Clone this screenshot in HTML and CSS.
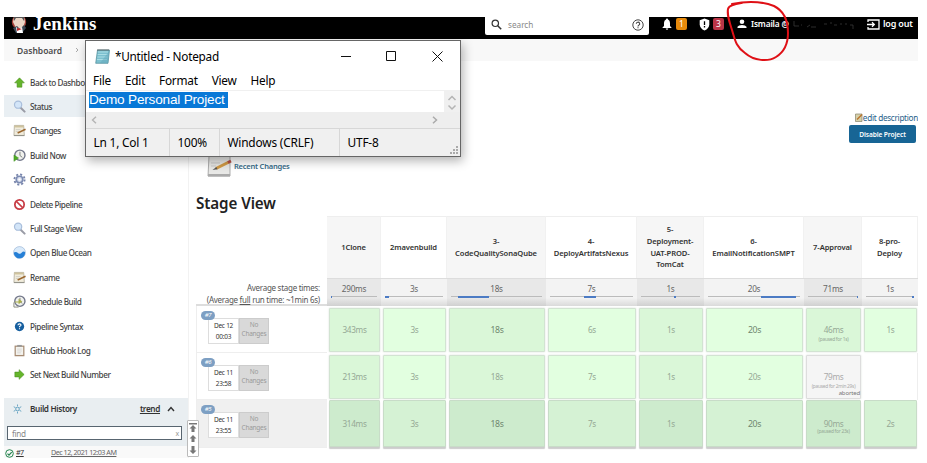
FILE: index.html
```html
<!DOCTYPE html>
<html lang="en">
<head>
<meta charset="utf-8">
<title>Jenkins - Stage View</title>
<link rel="stylesheet" href="styles.css">
</head>
<body>
<svg class="defs" width="0" height="0">
  <defs>
    <symbol id="search" viewBox="0 0 14 14"><path d="M8 8l4.500 4.500" stroke="#9a9ca6" stroke-width="2.200" stroke-linecap="round"/><circle cx="5.500" cy="5" r="3.900" fill="#d3e5f8" stroke="#a9bedb" stroke-width="1.300"/></symbol>
    <symbol id="note" viewBox="0 0 14 14"><path d="M1.500 1.500h10l.7 10.800H1z" fill="#f1ecdc" stroke="#aaa593" stroke-width=".8"/><path d="M1.500 1.700h10v2h-10z" fill="#cfc39d"/><path d="M3 6h5M3 8h3" stroke="#c2c2bd" stroke-width=".7"/><path d="M5 9.600l8.500-4" stroke="#9b672f" stroke-width="1.700"/><path d="M1 12.500h11.300" stroke="#8b8b84"/></symbol>
    <symbol id="arrow" viewBox="0 0 14 14"><path d="M7 2l5.200 5.400H9.600V12H4.400V7.400H1.800z" fill="#65b52b" stroke="#478b1d" stroke-width=".6"/></symbol>
    <symbol id="clock" viewBox="0 0 14 14"><circle cx="7.400" cy="6.700" r="5.500" fill="#f0f1ed" stroke="#72778a" stroke-width="1.500"/><path d="M7.500 3v4l2.500 2" fill="none" stroke="#777b79"/></symbol>
  </defs>
</svg>
<div class="app">
  <header class="top">
    <svg class="butler" viewBox="0 0 18 18" width="18" height="18"><circle cx="9" cy="5" r="7.200" fill="#a6423b"/><path d="M4 0h10l1 5-2 6H6L3 5z" fill="#ead5c5"/><path d="M4 0v4l2-3h6l2 3V0z" fill="#555"/><path d="M3 11l4-2 3 3 4-4 2 3-4 5H6z" fill="#394653"/><path d="M6 10l3 2 3-2 1 6H7z" fill="#fff"/><path d="M7 11l5 1-5 2z" fill="#bb2525"/></svg>
    <span class="brand">Jenkins</span>
    <div class="searchbox">
      <svg width="11" height="11" viewBox="0 0 11 11" fill="none" stroke="#333" stroke-width="1.200"><circle cx="4.300" cy="4.300" r="3.200"/><path d="M6.700 6.700L10.200 10.200" stroke-width="1.500"/></svg>
      <span>search</span>
      <svg class="help" width="12" height="12" viewBox="0 0 12 12" fill="none" stroke="#444"><circle cx="6" cy="6" r="5.200"/><path d="M4.300 4.800a1.700 1.600 0 1 1 2.600 1.300Q6 6.700 6 7.400M6 8.200v1.100" stroke-width="1.100"/></svg>
    </div>
    <svg class="bell" width="10" height="12" viewBox="0 0 10 12" fill="#fff"><path d="M5 0.500Q6 .5 6 1.500Q8 2.200 8 5v3l1.500 1.500v.5H.5v-.5L2 8V5Q2 2.200 4 1.500Q4 .5 5 .5zM3.700 10.500h2.600Q6 11.700 5 11.700T3.700 10.500z"/></svg>
    <span class="badge orange">1</span>
    <svg class="shield" width="11" height="13" viewBox="0 0 11 13"><path d="M5.500.5L10.300 2.300v4.200Q10 10.500 5.500 12.500Q1 10.500.7 6.500V2.300z" fill="#fff"/><path d="M5.500 3.200v3.800M5.500 8v1.500" stroke="#000" stroke-width="1.300"/></svg>
    <span class="badge red">3</span>
    <svg class="person" width="10" height="10" viewBox="0 0 10 10" fill="#fff"><circle cx="5" cy="2.700" r="2.300"/><path d="M.5 9V7.800Q1.500 6 5 6t4.500 1.800V9z"/></svg>
    <span class="user">Ismaila @</span>
    <svg class="scrub" width="62" height="10" viewBox="0 0 62 10" fill="none" stroke="#383838" stroke-width=".8"><path d="M1 1v5h5M8 5h1M14 7l3-2M18 7h5M31 4h3M38 2v2M41 5h3M47 4h2M53 3v2M57 5h3v4"/></svg>
    <svg class="exit" width="13" height="11" viewBox="0 0 13 11" fill="none" stroke="#fff" stroke-width="1.300"><path d="M1 3V1h11v9H1V8M0 5.500h7M5 3.300l2.300 2.200L5 7.700"/></svg>
    <span class="logout">log out</span>
  </header>
  <nav class="crumbs"><span>Dashboard</span><svg width="4" height="6" viewBox="0 0 4 6"><path d="M1 1l2 2-2 2" fill="none" stroke="#aaa"/></svg></nav>
  <div class="body">
    <aside class="side">
      <ul class="tasks">
        <li><svg><use href="#arrow"/></svg><span>Back to Dashboard</span></li>
        <li class="active"><svg><use href="#search"/></svg><span>Status</span></li>
        <li><svg><use href="#note"/></svg><span>Changes</span></li>
        <li><svg viewBox="0 0 14 14"><use href="#clock" width="14" height="14"/><path d="M1 6.500l5 3.200-5 3.600z" fill="#4eaa25" stroke="#398d1b" stroke-width=".5"/></svg><span>Build Now</span></li>
        <li><svg viewBox="0 0 14 14"><circle cx="7" cy="7" r="5.500" fill="none" stroke="#7784ab" stroke-width="2" stroke-dasharray="2.200 2.120"/><circle cx="7" cy="7" r="3.500" fill="#dce1ef" stroke="#7d8cb2" stroke-width="1.800"/><circle cx="7" cy="7" r="1.200" fill="#fff"/></svg><span>Configure</span></li>
        <li><svg viewBox="0 0 14 14"><circle cx="7" cy="7" r="5" fill="#fff" stroke="#c83c45" stroke-width="1.900"/><path d="M3.500 3.500l7 7" stroke="#c83c45" stroke-width="1.900"/></svg><span>Delete Pipeline</span></li>
        <li><svg><use href="#search"/></svg><span>Full Stage View</span></li>
        <li><svg viewBox="0 0 14 14"><circle cx="7" cy="7" r="6.400" fill="#d9eafa" stroke="#8baace" stroke-width=".6"/><path d="M1 7Q3 5.500 6 8q2 1 3.500-1Q11 5 13 6.500A6 6 0 0 1 1 8z" fill="#257fd6"/></svg><span>Open Blue Ocean</span></li>
        <li><svg><use href="#note"/></svg><span>Rename</span></li>
        <li><svg viewBox="0 0 14 14"><use href="#clock" width="14" height="14"/><path d="M2 7h4V4l4 3-4 3V8H2z" fill="#a8ad4d"/><path d="M1 8v5h5" stroke="#858778" fill="none"/></svg><span>Schedule Build</span></li>
        <li><svg viewBox="0 0 14 14"><circle cx="7" cy="7" r="5" fill="#175f9f"/><path d="M5.300 5.700q.2-1.500 1.700-1.500t1.700 1.200Q8.700 6.300 7 7v.8M7 8.800V10" fill="none" stroke="#fff" stroke-width="1.200"/></svg><span>Pipeline Syntax</span></li>
        <li><svg viewBox="0 0 14 14"><rect x="1.700" y="1.700" width="10.600" height="11.500" fill="#a68b73"/><path d="M3 3h8v8.800H3z" fill="#f4f3ee"/><path d="M4.500 1h5v2h-5z" fill="#999"/><path d="M4.500 5.500h5m-5 2h5m-5 2h4" stroke="#ccc" stroke-width=".7"/></svg><span>GitHub Hook Log</span></li>
        <li><svg viewBox="0 0 14 14"><g transform="rotate(90 7 7)"><use href="#arrow" width="14" height="14"/></g></svg><span>Set Next Build Number</span></li>
      </ul>
      <section class="history">
        <div class="hist-head"><svg width="9" height="10" viewBox="0 0 10 10" fill="none" stroke="#4d94b8" stroke-width=".9"><circle cx="5" cy="5" r="2"/><path d="M5 0v2M5 8v2M.8 2.500l2 1M7.200 6.500l2 1M.8 7.500l2-1M7.200 3.500l2-1"/></svg><b>Build History</b><u>trend</u><svg width="8" height="6" viewBox="0 0 8 6"><path d="M1 5l3-3.500L7 5" fill="none" stroke="#333" stroke-width="1.400"/></svg></div>
        <div class="find"><span>find</span><i>x</i></div>
      </section>
      <div class="build"><svg width="9" height="9" viewBox="0 0 9 9" fill="none" stroke="#24844e"><circle cx="4.500" cy="4.500" r="3.800"/><path d="M2.500 4.600l1.500 1.500 2.700-3" stroke-width="1.200"/></svg><u class="num">#7</u><u>Dec 12, 2021 12:03 AM</u></div>
    </aside>
    <main class="main">
      <div class="desc"><a><svg width="8" height="9" viewBox="0 0 8 9"><path d="M.5 1h6.500v7.500H.5z" fill="#d6d1aa" stroke="#86836a" stroke-width=".7"/><path d="M2 6.500l5-5" stroke="#bb742d" stroke-width="1.500"/></svg>edit description</a></div>
      <div class="disable"><button>Disable Project</button></div>
      <div class="recent"><svg width="25" height="24" viewBox="0 0 25 24"><path d="M2 1h21v20H1z" fill="#e8e8e6" stroke="#999" stroke-width=".8"/><path d="M1 19h22v2.500H1z" fill="#aaa"/><path d="M4 8h9M4 11h5" stroke="#c9c9c9"/><path d="M9 13.500L22 7" stroke="#d19a45" stroke-width="3"/><path d="M21 7.500l3-1.500" stroke="#b54f46" stroke-width="3"/><path d="M5.500 15l3.800-3 1.200 2.300z" fill="#555"/></svg><a>Recent Changes</a></div>
      <h1>Stage View</h1>
      <div class="stages">
        <div></div><div class="h o">1Clone</div><div class="h">2mavenbuild</div><div class="h o">3-<br>CodeQualitySonaQube</div><div class="h">4-<br>DeployArtifatsNexus</div><div class="h o">5-<br>Deployment-<br>UAT-PROD-<br>TomCat</div><div class="h">6-<br>EmailNotificationSMPT</div><div class="h o">7-Approval</div><div class="h">8-pro-<br>Deploy</div>
        <div class="avg-label">Average stage times:<br>(Average <u>full</u> run time: ~1min 6s)</div>
        <div class="avg o">290ms<span class="bar"><i style="margin-left:0;width:1%"></i></span></div>
        <div class="avg">3s<span class="bar"><i style="margin-left:0;width:7%"></i></span></div>
        <div class="avg o">18s<span class="bar"><i style="margin-left:8%;width:34%"></i></span></div>
        <div class="avg">7s<span class="bar"><i style="margin-left:41%;width:15%"></i></span></div>
        <div class="avg o">1s<span class="bar"><i style="margin-left:56%;width:4%"></i></span></div>
        <div class="avg">20s<span class="bar"><i style="margin-left:58%;width:38%"></i></span></div>
        <div class="avg o">71ms<span class="bar"><i style="margin-left:97%;width:2%"></i></span></div>
        <div class="avg">1s<span class="bar"><i style="margin-left:95%;width:5%"></i></span></div>

        <div class="run"><span class="tag">#7</span><div class="when"><span>Dec 12</span><span>00:03</span></div><div class="nochg">No<br>Changes</div></div>
        <div class="c o">343ms</div><div class="c">3s</div><div class="c o big">18s</div><div class="c">6s</div><div class="c o">1s</div><div class="c big">20s</div><div class="c o">46ms<small>(paused for 1s)</small></div><div class="c">1s</div>
        <div class="run"><span class="tag">#6</span><div class="when"><span>Dec 11</span><span>23:58</span></div><div class="nochg">No<br>Changes</div></div>
        <div class="c o">213ms</div><div class="c">3s</div><div class="c o">18s</div><div class="c">7s</div><div class="c o">1s</div><div class="c">20s</div><div class="c aborted">79ms<small>(paused for 2min 29s)</small><em>aborted</em></div><div class="none"></div>
        <div class="run last"><span class="tag">#5</span><div class="when"><span>Dec 11</span><span>23:55</span></div><div class="nochg">No<br>Changes</div></div>
        <div class="c o d">314ms</div><div class="c d">3s</div><div class="c o d big">18s</div><div class="c d">7s</div><div class="c o d">1s</div><div class="c d big">20s</div><div class="c o d">90ms<small>(paused for 23s)</small></div><div class="c d">2s</div>
      </div>
    </main>
  </div>
</div>

<div class="scroller"><svg width="8" height="32" viewBox="0 0 8 32" fill="#777"><path d="M0 0h8v1.500H0zM4 2l3.500 3.500h-2V9h-3V5.500h-2zM4 12l3.500 3.500h-2V19h-3v-3.500h-2zM4 31L.5 27.500h2V23h3v4.500h2z"/></svg></div>

<div class="notepad">
  <div class="title"><svg width="15" height="16" viewBox="0 0 15 16"><path d="M2.500 2h12l-1.500 13.300H.7z" fill="#7cc0cf" stroke="#4d8996" stroke-width=".7"/><path d="M3 4h10M2.700 6.500h10M2.500 9h10M2 11.500h10" stroke="#b7e4eb" stroke-width=".8"/><path d="M3 1v2m2-2v2m2-2v2m2-2v2m2-2v2m2-2v2" stroke="#555" stroke-width=".8"/><path d="M14.300 3L13 15.300H5z" fill="#64a7bb" opacity=".5"/></svg><span>*Untitled - Notepad</span>
    <svg class="wc" width="102" height="12" viewBox="0 0 102 12" fill="none" stroke="#111" stroke-width="1"><path d="M0 6.500h10M45.500 1.500h9v9h-9zM91.500 1.500l10 10M101.500 1.500l-10 10"/></svg></div>
  <div class="menu"><span>File</span><span>Edit</span><span>Format</span><span>View</span><span>Help</span></div>
  <div class="edit"><div class="doc"><span>Demo Personal Project&nbsp;</span></div><svg width="16" height="21" viewBox="0 0 16 21" fill="none" stroke="#b4b4b4" stroke-width="1.500"><path d="M4.500 9L8 5.500 11.500 9M4.500 14.500L8 18l3.500-3.500"/></svg></div>
  <div class="hscroll"><svg width="6" height="8" viewBox="0 0 6 8"><path d="M5 .7L1.500 4 5 7.300" fill="none" stroke="#b4b4b4" stroke-width="1.400"/></svg><svg width="6" height="8" viewBox="0 0 6 8"><path d="M1 .7L4.500 4 1 7.300" fill="none" stroke="#aaa" stroke-width="1.500"/></svg></div>
  <div class="status"><span class="p1">Ln 1, Col 1</span><span class="p2">100%</span><span class="p3">Windows (CRLF)</span><span class="p4">UTF-8</span><svg width="8" height="8" viewBox="0 0 8 8" fill="#aaa"><path d="M6 0h2v2H6zM6 3h2v2H6zM3 3h2v2H3zM0 6h2v2H0zM3 6h2v2H3zM6 6h2v2H6z"/></svg></div>
</div>

<svg class="mark" width="68" height="64" viewBox="0 0 68 64" fill="none" stroke="#df1016" stroke-width="2" stroke-linecap="round"><path d="M6 4C20 1 35 1 48 6C58 11 62 22 62 33C62 43 58 52 50 57C42 62 28 61 19 53C10 47 9 40 6 30C3 21 1 15 2 9C3 5 10 4 16 3"/></svg>
</body>
</html>
```
FILE: styles.css
```css
* { box-sizing: border-box; }
body { margin: 0; width: 927px; height: 463px; overflow: hidden; background: #fff; font-family: "Noto Sans", "Open Sans", sans-serif; font-size: 8px; color: #333; position: relative; }
.defs { position: absolute; }
svg { flex: none; display: block; }
.app { margin: 17px 0 0 4px; width: 914px; height: 441px; overflow: hidden; }

.top { height: 22px; background: #000; display: flex; align-items: flex-start; color: #fff; white-space: nowrap; }
.butler { margin-left: 6px; }
.brand { font: bold 19px/16px "Liberation Serif", serif; width: 452px; margin: -1px 0 0 5px; letter-spacing: .2px; }
.searchbox { height: 18px; width: 164px; background: #fff; border-radius: 0 0 2px 2px; display: flex; align-items: center; padding: 0 5px 3px 6px; color: #888; font-size: 8.2px; }
.searchbox span { margin-left: 6px; }
.searchbox .help { margin-left: auto; }
.bell { margin: 1px 0 0 13px; }
.badge { width: 11px; height: 12px; border-radius: 2px; font-size: 8.5px; line-height: 12px; text-align: center; margin-top: 1px; }
.orange { background: #e88b0c; margin-left: 4px; }
.red { background: #ba3547; margin-left: 3px; }
.shield { margin: 1px 0 0 12px; }
.person { margin: 2px 0 0 13px; }
.user { font-weight: 600; font-size: 8.3px; line-height: 14px; margin-left: 4px; width: 41px; letter-spacing: -.15px; }
.scrub { margin: 3px 0 0 1px; }
.exit { margin: 2px 0 0 12px; }
.logout { font-weight: 600; font-size: 9px; line-height: 14px; margin-left: 3px; letter-spacing: -.2px; }

.crumbs { height: 22px; background: #f8f8f8; display: flex; align-items: center; gap: 13px; padding: 0 0 0 13px; font-weight: 600; font-size: 8.5px; color: #4c4c4c; }
.body { display: flex; height: 397px; }
.side { width: 185px; border-right: 1px solid #f2f2f2; flex: none; }
.tasks { list-style: none; margin: 0; padding: 9px 0 0; height: 337px; }
.tasks li { display: flex; align-items: center; gap: 4px; height: 24.4px; padding-left: 9px; font-weight: 500; font-size: 8.2px; letter-spacing: -.44px; color: #444; white-space: nowrap; }
.tasks svg { width: 13px; height: 13px; }
.tasks .active { background: linear-gradient(#e9eff3, #e9eff3) 0 1px / 100% 22px no-repeat; }
.history { background: #e9eef1; height: 48px; padding: 3px 6px 0 3px; }
.hist-head { display: flex; align-items: center; height: 15px; padding-left: 6px; font-size: 8.2px; font-weight: 600; color: #333; }
.hist-head b { font-weight: 600; margin-left: 8px; letter-spacing: -.35px; }
.hist-head u { margin: 0 7px 0 auto; letter-spacing: -.35px; }
.hist-head svg:last-child { margin-right: 7px; }
.find { margin-top: 10px; height: 14px; background: #fff; border: 1px solid #586570; display: flex; justify-content: space-between; align-items: center; padding: 0 2px 0 4px; color: #888; font-size: 8.2px; letter-spacing: -.3px; }
.find i { font-style: normal; font-size: 7px; color: #999; }
.build { height: 12px; background: #f9f9f9; display: flex; align-items: center; padding: 0 0 0 1px; color: #666; font-size: 7.2px; line-height: 10px; letter-spacing: -.52px; }
.build svg { margin-top: 3px; }
.build .num { width: 35px; margin-left: 2px; color: #333; }

.main { flex: 1; min-width: 0; padding: 49px 0 0 7px; }
.desc { height: 15px; display: flex; justify-content: flex-end; }
.desc a { display: flex; align-items: center; height: 15px; font-size: 8.2px; letter-spacing: -.3px; color: #27618a; white-space: nowrap; }
.disable { display: flex; justify-content: flex-end; height: 30px; padding-right: 2px; }
.disable button { width: 67px; height: 18px; border: 0; border-radius: 2px; background: #176595; color: #fff; font: 600 6.6px "Noto Sans", sans-serif; letter-spacing: -.1px; padding: 0; white-space: nowrap; }
.recent { display: flex; height: 26px; padding-left: 11px; gap: 2px; }
.recent a { font-size: 7.5px; font-weight: 600; color: #356b88; line-height: 22px; letter-spacing: -.22px; }
h1 { margin: 12px 0 0; height: 23px; font-size: 15.2px; line-height: 21px; font-weight: 600; color: #222; letter-spacing: -.1px; white-space: nowrap; }
.stages { width: 722px; display: grid; grid-template-columns: 131px 54px 66px 99px 91px 67px 100px 58px 56px; grid-template-rows: 62px 28px 47px 47px 48px; }
.stages > * { min-width: 0; }
.h { display: flex; align-items: center; justify-content: center; text-align: center; font-size: 7.6px; line-height: 11.6px; font-weight: 600; border-top: 1px solid #eee; border-right: 1px solid #f1f1f1; color: #333; letter-spacing: -.1px; }
.h.o { background: #f6f6f6; }
.avg-label { text-align: right; padding: 4px 7px 0 0; font-size: 8px; line-height: 11.5px; letter-spacing: -.27px; color: #555; border-bottom: 2px solid #ddd; white-space: nowrap; }
.avg { background: linear-gradient(#f3f3f3 70%, #dadada); border-top: 1px solid #ddd; text-align: center; font-size: 8.2px; line-height: 19px; letter-spacing: -.25px; color: #666; padding: 0 4px; }
.avg.o { background: linear-gradient(#e8e8e8 70%, #d0d0d0); }
.bar { display: flex; height: 1px; background: #bbb; margin: -2px 0 0; }
.bar i { height: 2px; flex: none; background: #4c7bc4; }
.run { border-left: 1px solid #eee; border-bottom: 1px solid #eee; display: flex; padding: 12px 0 0 11px; position: relative; font-size: 6.5px; letter-spacing: -.25px; }
.run.last { background: #f0f0f0; }
.tag { position: absolute; left: 4px; top: 5px; width: 14px; height: 9px; border-radius: 5px; background: #7d9fc3; color: #fff; line-height: 9px; text-align: center; font-size: 6px; font-style: italic; }
.when { width: 31px; height: 26px; border: 1px solid #ddd; background: #fff; display: flex; flex-direction: column; align-items: center; justify-content: space-between; padding: 2px 0; line-height: 9px; }
.nochg { width: 30px; height: 26px; background: #d9d9d9; border: 1px solid #ccc; color: #999; text-align: center; line-height: 9px; padding-top: 1px; }
.c { margin: 2px 1px 1px 2px; background: #e2ffe0; border: 1px solid #d2e3d2; box-shadow: 0 0 2px #d6ded6; border-radius: 1px; display: flex; flex-direction: column; align-items: center; justify-content: center; position: relative; color: #95a895; font-size: 8.2px; letter-spacing: -.3px; line-height: 10px; }
.c.o { background: #daf7d8; }
.c.d { background: #d5f2d4; margin-top: 0; border-color: #c8dcc8; }
.c.o.d { background: #cdebcd; }
.c.big { font-size: 8.7px; color: #6f876f; }
.c small { position: absolute; left: 0; right: 0; top: 27px; font-size: 4.8px; line-height: 7px; letter-spacing: -.25px; text-align: center; white-space: nowrap; }
.c.aborted { background: #f5f5f5; border-color: #ddd; color: #aaa; }
.c em { position: absolute; right: 0; bottom: 1px; font-style: normal; font-size: 6px; line-height: 7px; letter-spacing: -.15px; color: #777; }
.none { border-right: 1px solid #eee; }
.stages .d { box-shadow: 0 2px 1px #ccc; }

.scroller { position: absolute; left: 187px; top: 420px; width: 12px; height: 37px; background: #fff; border: 1px solid #bbb; display: flex; align-items: center; justify-content: center; border-radius: 1px; }

.notepad { position: absolute; left: 85px; top: 40px; width: 376px; height: 117px; border: 1px solid #666; background: #fff; box-shadow: 2px 4px 10px rgba(0,0,0,.3); font-family: "Noto Sans", "Open Sans", sans-serif; font-size: 12px; color: #000; white-space: nowrap; }
.title { height: 30px; display: flex; align-items: center; padding: 0 17px 1px 9px; gap: 5px; font-size: 11.8px; letter-spacing: -.27px; }
.title .wc { margin-left: auto; }
.menu { height: 19px; display: flex; padding-left: 7px; gap: 13.8px; line-height: 19px; font-size: 11.8px; letter-spacing: -.2px; }
.edit { height: 22px; display: flex; background: #f0f0f0; padding-top: 1px; }
.doc { width: 358px; background: #fff; padding-left: 3px; }
.doc span { display: inline-block; height: 16px; background: #0878d7; color: #fff; font: 13.6px/16px "Liberation Sans", sans-serif; letter-spacing: -.2px; }
.hscroll { height: 16px; background: #eee; display: flex; justify-content: space-between; align-items: center; padding: 0 22px 0 5px; }
.status { height: 28px; background: #f0f0f0; border-top: 1px solid #d7d7d7; display: flex; font-size: 11.9px; line-height: 27px; letter-spacing: -.2px; position: relative; }
.status span { padding-left: 7.500px; border-right: 1px solid #d7d7d7; }
.p1 { width: 84px; }
.p2 { width: 50px; }
.p3 { width: 120px; }
.status .p4 { flex: 1; border: 0; }
.status svg { position: absolute; right: 2px; bottom: 2px; }
.mark { position: absolute; left: 726px; top: 0; }
```
